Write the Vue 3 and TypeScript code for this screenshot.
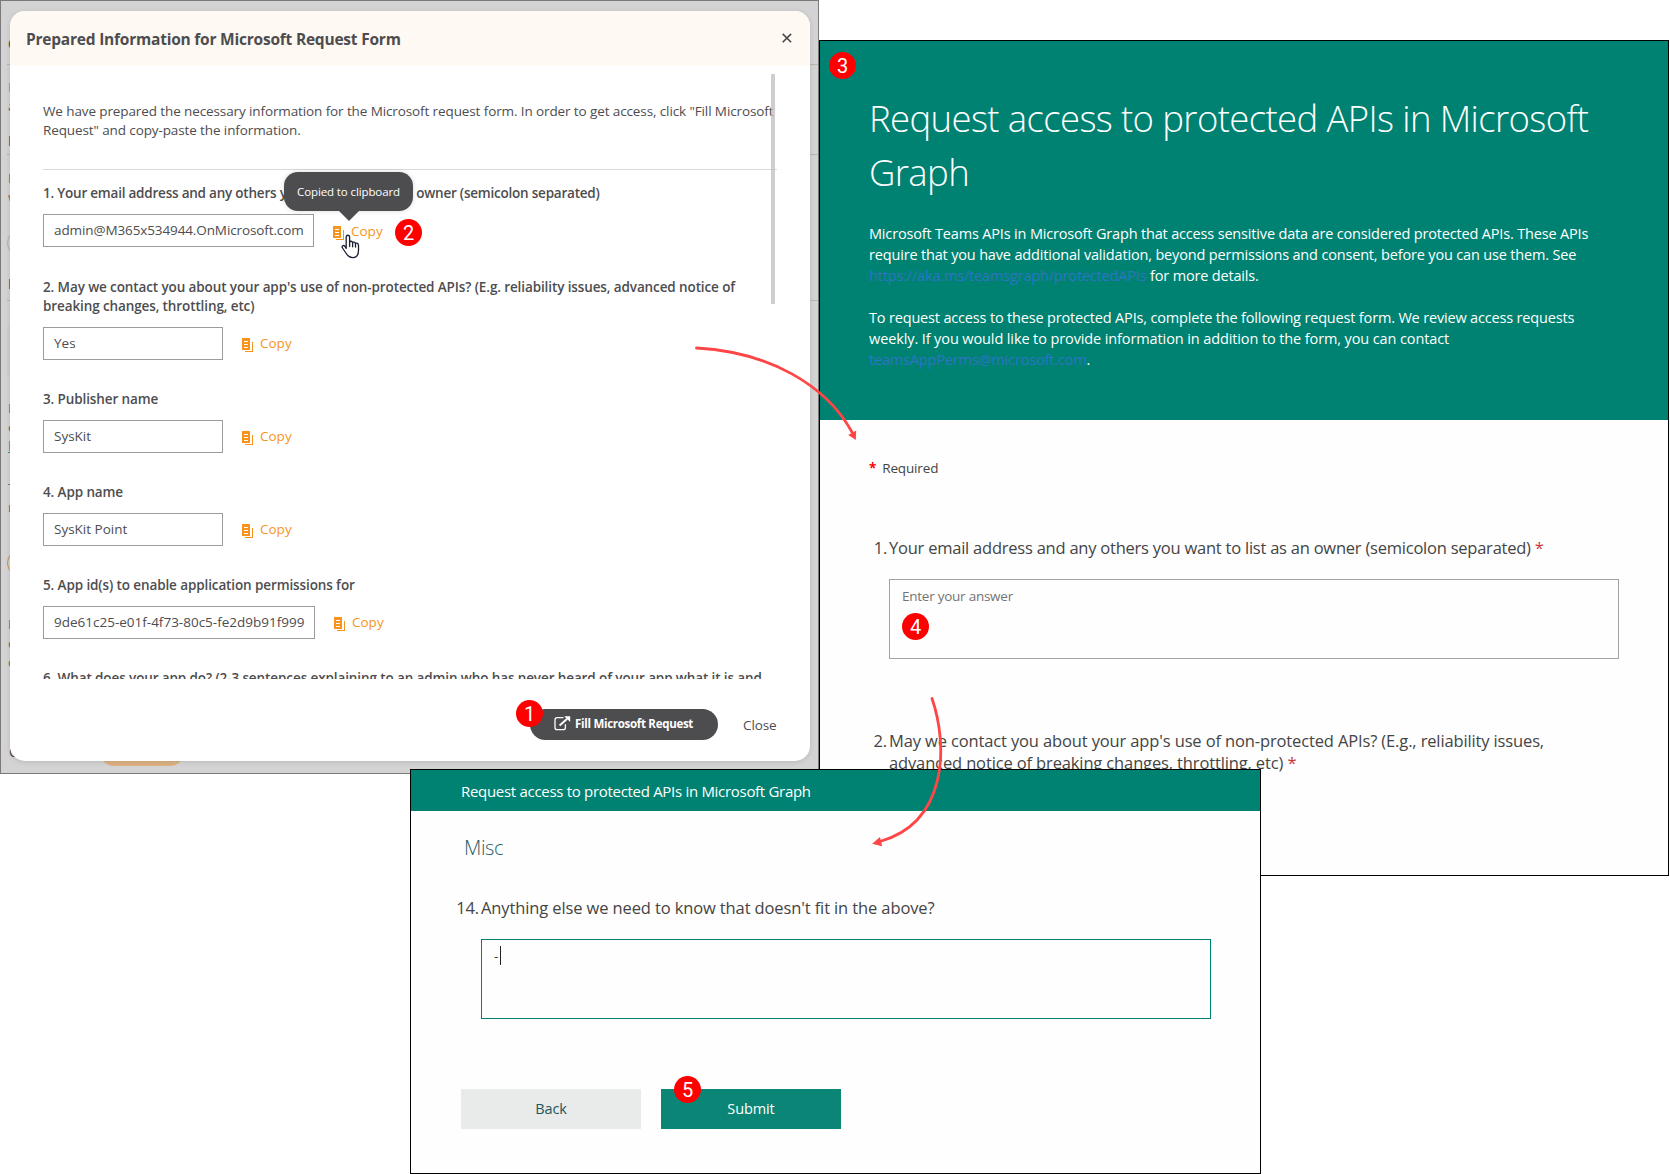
<script setup lang="ts">
interface Field {
  label: string[]
  value: string
}

interface PageMark {
  kind: string
  text: string
  gap: number
}

const fields: Field[] = [
  {
    label: ['1. Your email address and any others you want to list as an owner (semicolon separated)'],
    value: 'admin@M365x534944.OnMicrosoft.com',
  },
  {
    label: [
      "2. May we contact you about your app's use of non-protected APIs? (E.g. reliability issues, advanced notice of",
      'breaking changes, throttling, etc)',
    ],
    value: 'Yes',
  },
  { label: ['3. Publisher name'], value: 'SysKit' },
  { label: ['4. App name'], value: 'SysKit Point' },
  {
    label: ['5. App id(s) to enable application permissions for'],
    value: '9de61c25-e01f-4f73-80c5-fe2d9b91f999',
  },
]

// Slivers of the page that stay visible beside the dialog.
const marks: PageMark[] = [
  { kind: 'strong', text: 'C', gap: 34 },
  { kind: 'rule', text: '', gap: 9 },
  { kind: 'warm', text: 'D', gap: 13 },
  { kind: 'plain', text: 'a', gap: 0 },
  { kind: 'strong', text: 'D', gap: 16 },
  { kind: 'rule', text: '', gap: 2 },
  { kind: 'plain', text: 'D', gap: 14 },
  { kind: 'plain', text: 'w', gap: 0 },
  { kind: 'pill', text: '', gap: 22 },
  { kind: 'strong', text: 'D', gap: 18 },
  { kind: 'rule', text: '', gap: 5 },
  { kind: 'card', text: '', gap: 19 },
  { kind: 'plain', text: 'D', gap: 17 },
  { kind: 'plain', text: 'e', gap: 0 },
  { kind: 'link', text: 'l', gap: 0 },
  { kind: 'plain', text: 'T', gap: 23 },
  { kind: 'plain', text: 'n', gap: 0 },
  { kind: 'pill amber', text: '', gap: 32 },
  { kind: 'plain', text: 'P', gap: 38 },
  { kind: 'plain', text: 'd', gap: 0 },
  { kind: 'plain', text: 'd', gap: 0 },
]
</script>

<template>
  <div class="scene">
    <!-- Dialog window -->
    <section class="window app-window">
      <div class="page">
        <div
          v-for="(m, i) in marks"
          :key="i"
          class="mark"
          :class="m.kind"
          :style="{ marginTop: m.gap + 'px' }"
        >{{ m.text }}</div>
        <div class="page-footer">
          <span class="page-cancel">C</span>
          <span class="page-button"></span>
        </div>
      </div>

      <div class="modal">
        <header class="modal-head">
          <h1>Prepared Information for Microsoft Request Form</h1>
          <svg class="close-x" width="10" height="10" viewBox="0 0 10 10">
            <path d="M0.7 0.9 L9.1 9.3 M9.1 0.9 L0.7 9.3" fill="none" stroke="#4a4a4c" stroke-width="1.6" />
          </svg>
        </header>

        <div class="modal-body">
          <p class="intro">
            <span class="line">We have prepared the necessary information for the Microsoft request form. In order to get access, click "Fill Microsoft</span>
            <span class="line">Request" and copy-paste the information.</span>
          </p>

          <div v-for="(f, i) in fields" :key="i" class="field" :class="'field-' + (i + 1)">
            <div class="label">
              <span v-for="l in f.label" :key="l" class="line">{{ l }}</span>
            </div>
            <div class="row">
              <div class="value"><span>{{ f.value }}</span></div>
              <div class="copy">
                <svg width="11" height="14" viewBox="0 0 11 14" shape-rendering="crispEdges" fill="#f7941d">
                  <path fill-rule="evenodd" d="M0 0H8V12H0ZM2 3V4H6V3ZM2 6V7H6V6ZM2 9V10H6V9Z" />
                  <path d="M10 4H11V14H3V13H10Z" />
                </svg>
                <span>Copy</span>
              </div>
            </div>
          </div>
          <div class="label last">
            <span class="line">6. What does your app do? (2-3 sentences explaining to an admin who has never heard of your app what it is and</span>
          </div>
          <div class="scrollbar"></div>
        </div>

        <footer class="modal-foot">
          <div class="fill-button">
            <svg width="17" height="15" viewBox="0 0 17 15">
              <path d="M9.5 1.6H3.2Q1 1.6 1 3.8V11.4Q1 13.6 3.2 13.6H9.2Q11.4 13.6 11.4 11.4V8.2" fill="none" stroke="#fff" stroke-width="1.3" />
              <path d="M5.6 9.4L13.2 2.8" stroke="#fff" stroke-width="2" />
              <path d="M10.2 0.2H16.2V6Z" fill="#fff" />
            </svg>
            <span>Fill Microsoft Request</span>
          </div>
          <span class="close-link">Close</span>
        </footer>
      </div>

      <div class="tooltip"><span>Copied to clipboard</span></div>
      <svg class="cursor" width="20" height="25" viewBox="0 0 20 25">
        <path
          d="M5.2 14.4V3.2C5.2 0.6 8.6 0.6 8.6 3.2V8.2C9 6.8 11.4 6.9 11.6 8.8C12.2 7.6 14.3 7.9 14.5 9.6C15.4 8.7 17.5 9.2 17.5 11.2V16.4C17.5 20.8 15.4 23.6 11.6 23.6C8 23.6 6.6 21.8 4.9 19L1.5 14C0.2 12 2.6 10.6 4 12.4Z"
          fill="#fff"
          stroke="#1c1f33"
          stroke-width="1.3"
          stroke-linejoin="round"
        />
        <path d="M8.6 8V12.6M11.6 8.8V12.8M14.5 9.6V13" stroke="#1c1f33" stroke-width="1.3" stroke-linecap="round" />
      </svg>
    </section>

    <!-- Request form -->
    <section class="window form-window">
      <header class="form-head">
        <h2>
          <span class="line">Request access to protected APIs in Microsoft</span>
          <span class="line">Graph</span>
        </h2>
        <p>
          <span class="line">Microsoft Teams APIs in Microsoft Graph that access sensitive data are considered protected APIs. These APIs</span>
          <span class="line">require that you have additional validation, beyond permissions and consent, before you can use them. See</span>
          <span class="line"><a>https://aka.ms/teamsgraph/protectedAPIs</a> for more details.</span>
        </p>
        <p>
          <span class="line">To request access to these protected APIs, complete the following request form. We review access requests</span>
          <span class="line looser">weekly. If you would like to provide information in addition to the form, you can contact</span>
          <span class="line"><a>teamsAppPerms@microsoft.com</a>.</span>
        </p>
      </header>
      <div class="form-body">
        <div class="required"><b>*</b><span>Required</span></div>
        <div class="question q-first">
          <span class="num">1.</span>
          <div class="q-text">
            <span class="line">Your email address and any others you want to list as an owner (semicolon separated) <i>*</i></span>
          </div>
        </div>
        <div class="answer"><span>Enter your answer</span></div>
        <div class="question q-second">
          <span class="num">2.</span>
          <div class="q-text">
            <span class="line">May we contact you about your app's use of non-protected APIs? (E.g., reliability issues,</span>
            <span class="line">advanced notice of breaking changes, throttling, etc) <i>*</i></span>
          </div>
        </div>
      </div>
    </section>

    <!-- Last step of the form -->
    <section class="window misc-window">
      <header class="misc-head">Request access to protected APIs in Microsoft Graph</header>
      <div class="misc-body">
        <h3>Misc</h3>
        <div class="question q-misc">
          <span class="num">14.</span>
          <div class="q-text"><span class="line">Anything else we need to know that doesn't fit in the above?</span></div>
        </div>
        <div class="answer focused"><span>-</span><i class="caret"></i></div>
        <div class="actions">
          <div class="btn back">Back</div>
          <div class="btn submit">Submit</div>
        </div>
      </div>
    </section>

    <!-- Step annotations -->
    <svg class="arrows" width="1670" height="1174" viewBox="0 0 1670 1174">
      <g fill="none" stroke="#ff4545" stroke-width="2.8" stroke-linecap="round">
        <path d="M696.5 348C768 352 826 384 852.5 433" />
        <path d="M932 698.5C948 745 948 822 880 841.5" />
      </g>
      <g fill="#ff4545">
        <path d="M848.2 435L856.2 430.6L855.8 440Z" />
        <path d="M872.2 843.8L880 837L882.2 846.2Z" />
      </g>
    </svg>
    <span class="badge b1">1</span>
    <span class="badge b2">2</span>
    <span class="badge b3">3</span>
    <span class="badge b4">4</span>
    <span class="badge b5">5</span>
  </div>
</template>

<style>
body {
  margin: 0;
  background: #fff;
}
</style>

<style scoped>
.scene {
  position: relative;
  width: 1670px;
  height: 1174px;
  overflow: hidden;
  font-family: "Open Sans", "Noto Sans", sans-serif;
  color: #4d4d4f;
}
.scene * {
  box-sizing: border-box;
}
h1, h2, h3, p {
  margin: 0;
  font-weight: 400;
}
.line {
  display: block;
  white-space: nowrap;
}
.window {
  position: absolute;
  overflow: hidden;
  border: 1px solid #000;
  background: #fefefe;
}

/* Dialog window */
.app-window {
  left: 0;
  top: 0;
  width: 819px;
  height: 774px;
  border-color: #7b7979;
  background: #d3d3d3;
}
.page {
  display: flex;
  flex-direction: column;
  height: 772px;
  padding-left: 6px;
}
.mark {
  flex: none;
  height: 19px;
  padding-left: 1px;
  font-size: 13.5px;
  line-height: 19px;
  color: #6d6a66;
}
.mark.strong {
  height: 20px;
  font-weight: 700;
  color: #6b5844;
}
.mark.warm {
  color: #b08d68;
}
.mark.rule {
  height: 1px;
  background: #b5b5b5;
}
.mark.pill {
  width: 200px;
  height: 28px;
  border: 1px solid #b0b0b0;
  border-radius: 14px;
}
.mark.amber {
  border-color: #c98f4c;
}
.mark.card {
  width: 300px;
  height: 62px;
  border-radius: 12px;
  background: #cecece;
}
.mark.link {
  color: #3a87ad;
  text-decoration: underline;
}
.page-footer {
  display: flex;
  flex: 1;
  align-items: flex-end;
  padding: 0 0 7px 2px;
}
.page-cancel {
  width: 91px;
  font-size: 14px;
  line-height: 28px;
}
.page-button {
  width: 84px;
  height: 28px;
  border-radius: 14px;
  background: #dcb183;
}
.modal {
  position: absolute;
  left: 9px;
  top: 10px;
  display: flex;
  flex-direction: column;
  width: 800px;
  height: 750px;
  overflow: hidden;
  border-radius: 15px;
  background: #fff;
  box-shadow: 0 1px 5px rgba(0, 0, 0, 0.12);
}
.modal-head {
  display: flex;
  justify-content: space-between;
  flex: none;
  height: 55px;
  padding: 0 18px 0 16px;
  background: #fff9f3;
}
.modal-head h1 {
  font-size: 15.5px;
  font-weight: 700;
  line-height: 57px;
  letter-spacing: -0.22px;
  white-space: nowrap;
}
.close-x {
  margin-top: 22px;
}
.modal-body {
  position: relative;
  display: flex;
  flex-direction: column;
  flex: none;
  height: 613px;
  padding: 36px 33px 0;
  overflow: hidden;
  font-size: 13.5px;
  line-height: 19px;
}
.intro {
  flex: none;
  height: 68px;
  border-bottom: 1px solid #d9dad9;
  letter-spacing: -0.11px;
}
.field {
  flex: none;
  margin-bottom: 30px;
}
.field-1 {
  margin-top: 14px;
}
.label {
  font-weight: 600;
  letter-spacing: -0.11px;
}
.field-1 .label {
  letter-spacing: -0.22px;
}
.row {
  display: flex;
  height: 33px;
  margin-top: 11px;
}
.field-2 {
  padding-top: 1px;
}
.value {
  display: flex;
  align-items: center;
  width: 180px;
  height: 33px;
  padding-left: 10px;
  border: 1px solid #9c9c9c;
  white-space: nowrap;
}
.field-1 .value {
  width: 271px;
  letter-spacing: -0.11px;
}
.field-5 .value {
  width: 272px;
}
.copy {
  display: flex;
  margin-left: 19px;
  color: #f7941d;
}
.copy svg {
  margin: 11px 7px 0 0;
}
.copy span {
  line-height: 32px;
}
.field-1 .copy {
  padding-top: 1px;
}
.last {
  flex: none;
}
.scrollbar {
  position: absolute;
  left: 761px;
  top: 8px;
  width: 4px;
  height: 230px;
  background: rgba(190, 190, 190, 0.75);
}
.modal-foot {
  display: flex;
  align-items: flex-start;
  justify-content: flex-end;
  padding: 30px 34px 0 0;
}
.fill-button {
  display: flex;
  align-items: center;
  width: 188px;
  height: 31px;
  padding-left: 24px;
  border-radius: 16px;
  background: #4d4d4f;
  color: #fff;
  font-size: 11.5px;
  font-weight: 700;
  letter-spacing: -0.29px;
  white-space: nowrap;
}
.fill-button svg {
  margin: 0 4px 3px 0;
}
.fill-button span {
  margin-bottom: 2px;
}
.close-link {
  width: 33px;
  margin-left: 25px;
  font-size: 13.5px;
  line-height: 32px;
  letter-spacing: -0.1px;
}
.tooltip {
  position: absolute;
  left: 283px;
  top: 171px;
  width: 129px;
  height: 39px;
  border-radius: 14px;
  background: #4d4d4f;
  box-shadow: 0 0 5px rgba(0, 0, 0, 0.15);
  color: #fff;
  font-size: 11.5px;
  line-height: 39px;
  letter-spacing: -0.11px;
  text-align: center;
  white-space: nowrap;
}
.tooltip::after {
  content: "";
  position: absolute;
  left: 55px;
  top: 39px;
  border: 10px solid transparent;
  border-top-color: #4d4d4f;
  border-bottom: 0;
}
.cursor {
  position: absolute;
  left: 340px;
  top: 233px;
}

/* Request form */
.form-window {
  left: 819px;
  top: 40px;
  width: 850px;
  height: 836px;
}
.form-head {
  height: 379px;
  padding: 50px 49px 0;
  background: #008272;
  color: #fff;
}
.form-head h2 {
  margin-bottom: 24px;
  font-size: 36.5px;
  font-weight: 300;
  line-height: 54px;
  letter-spacing: -0.62px;
}
.form-head p {
  margin-bottom: 21px;
  font-size: 14.5px;
  line-height: 21px;
  letter-spacing: -0.17px;
}
.form-head .looser {
  letter-spacing: -0.11px;
}
.form-head a {
  color: #2d74c4;
}
.form-body {
  padding: 0 49px;
  color: #444;
}
.required {
  display: flex;
  gap: 6px;
  padding-top: 38px;
  font-size: 13.5px;
  line-height: 21px;
  letter-spacing: -0.15px;
}
.required b {
  color: #f00;
}
.question {
  display: flex;
  font-size: 16.5px;
  line-height: 22px;
  letter-spacing: -0.12px;
}
.num {
  width: 20px;
  flex: none;
  text-align: right;
  padding-right: 2px;
  white-space: nowrap;
}
.question i {
  color: #c8373b;
  font-style: normal;
}
.q-first {
  margin-top: 58px;
  letter-spacing: -0.23px;
}
.q-second {
  margin-top: 71px;
  letter-spacing: -0.135px;
}
.answer {
  display: flex;
  width: 730px;
  height: 80px;
  margin: 20px 0 0 20px;
  padding: 6px 12px;
  border: 1px solid #a3a3a3;
  color: #747474;
  font-size: 13.5px;
  line-height: 20px;
  letter-spacing: -0.25px;
}

/* Last step */
.misc-window {
  left: 410px;
  top: 769px;
  width: 851px;
  height: 405px;
}
.misc-head {
  height: 41px;
  padding-left: 50px;
  background: #008272;
  color: #fff;
  font-size: 15px;
  line-height: 42px;
  letter-spacing: -0.3px;
  white-space: nowrap;
}
.misc-body {
  color: #444;
}
.misc-body h3 {
  padding: 22px 0 0 53px;
  color: #1f5f68;
  font-size: 20px;
  font-weight: 300;
  line-height: 30px;
  letter-spacing: -0.35px;
}
.q-misc {
  margin-top: 34px;
}
.q-misc .num {
  width: 70px;
}
.answer.focused {
  margin: 20px 0 0 70px;
  border-color: #008272;
  color: #333;
}
.caret {
  width: 1px;
  height: 19px;
  margin-left: 2px;
  background: #222;
}
.actions {
  display: flex;
  gap: 20px;
  margin: 70px 0 0 50px;
}
.btn {
  width: 180px;
  height: 40px;
  font-size: 14.5px;
  line-height: 40px;
  letter-spacing: -0.1px;
  text-align: center;
}
.back {
  background: #e9eaea;
  color: #1d565c;
}
.submit {
  background: #0a8576;
  color: #fff;
}

/* Annotations */
.arrows {
  position: absolute;
  left: 0;
  top: 0;
}
.badge {
  position: absolute;
  width: 27px;
  height: 27px;
  border-radius: 50%;
  background: #f00;
  color: #fff;
  font-family: Roboto, "Liberation Sans", sans-serif;
  font-size: 20px;
  line-height: 28px;
  text-align: center;
}
.b1 { left: 516px; top: 700px; }
.b2 { left: 395px; top: 219px; }
.b3 { left: 829px; top: 52px; }
.b4 { left: 902px; top: 613px; }
.b5 { left: 674px; top: 1076px; }
</style>
